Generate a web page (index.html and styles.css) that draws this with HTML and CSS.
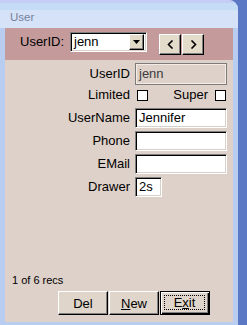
FILE: index.html
```html
<!DOCTYPE html>
<html>
<head>
<meta charset="utf-8">
<link rel="stylesheet" href="styles.css">
</head>
<body>
<div class="window">
  <div class="frame">
    <div class="titlebar">User</div>
    <div class="panel">
      <div class="header">
        <span class="hlabel">UserID:</span>
        <div class="combo">
          <span class="combo-text">jenn</span>
          <span class="combo-btn"><svg width="7" height="4" viewBox="0 0 7 4"><path d="M0 0h7L3.5 4z" fill="#000"/></svg></span>
        </div>
        <div class="navs">
          <button class="nav"><svg width="7" height="9" viewBox="0 0 7 9"><path d="M5.5 0.5L1.5 4.5L5.5 8.5" fill="none" stroke="#000" stroke-width="1.6"/></svg></button>
          <button class="nav"><svg width="7" height="9" viewBox="0 0 7 9"><path d="M1.5 0.5L5.5 4.5L1.5 8.5" fill="none" stroke="#000" stroke-width="1.6"/></svg></button>
        </div>
      </div>
      <div class="body">
        <div class="form">
          <div class="row row-id"><span class="label">UserID</span><div class="field disabled">jenn</div></div>
          <div class="row row-check"><span class="label">Limited</span><span class="check"></span><span class="label2">Super</span><span class="check check-last"></span></div>
          <div class="row"><span class="label">UserName</span><div class="field">Jennifer</div></div>
          <div class="row"><span class="label">Phone</span><div class="field"></div></div>
          <div class="row"><span class="label">EMail</span><div class="field"></div></div>
          <div class="row"><span class="label">Drawer</span><div class="field short">2s</div></div>
        </div>
        <div class="footer">
          <div class="status">1 of 6 recs</div>
          <div class="buttons">
            <button class="btn">Del</button>
            <button class="btn"><u>N</u>ew</button>
            <button class="btn default"><span class="focus">E<u>x</u>it</span></button>
          </div>
        </div>
      </div>
    </div>
  </div>
  <div class="edge"></div>
</div>
</body>
</html>
```

FILE: styles.css
```css
* { box-sizing: border-box; }
html, body { margin: 0; padding: 0; }
body {
  font-family: "Liberation Sans", Arial, sans-serif;
  background: #5a78c4;
}
.window {
  width: 247px;
  height: 325px;
  display: flex;
  background: #5a78c4;
}
.frame {
  width: 238px;
  height: 325px;
  display: flex;
  flex-direction: column;
  background: #b9cdf0;
  border-top-right-radius: 9px;
  overflow: hidden;
}
.edge {
  width: 9px;
  background: #5a78c4;
}
.titlebar {
  height: 28px;
  padding: 10px 0 0 10px;
  font-size: 11.5px;
  line-height: 14px;
  color: #74809c;
  background: linear-gradient(#c6cdf4 0 3px, #c4dcf6 3px 10px, #d6e2f8 10px);
}
.panel {
  margin: 0 5px;
  height: 294px;
  display: flex;
  flex-direction: column;
}
.header {
  height: 32px;
  background: #c49a9b;
  display: flex;
  align-items: flex-start;
  padding-left: 15px;
}
.hlabel {
  font-size: 13px;
  line-height: 20px;
  margin-top: 4px;
  width: 44px;
}
.combo {
  margin-left: 6px;
  margin-top: 4px;
  width: 77px;
  height: 20px;
  background: #fff;
  border: 1px solid;
  border-color: #808080 #fff #fff #808080;
  box-shadow: inset 1px 1px #000, inset -1px -1px #d8d0c8;
  display: flex;
  align-items: center;
  padding: 2px;
}
.combo-text {
  flex: 1;
  font-size: 13px;
  line-height: 16px;
  padding-left: 1px;
}
.combo-btn {
  width: 15px;
  height: 16px;
  background: #e2dac8;
  border: 1px solid;
  border-color: #fff #000 #000 #fff;
  box-shadow: inset -1px -1px #808080;
  display: flex;
  align-items: center;
  justify-content: center;
}
.navs {
  margin-left: 12px;
  margin-top: 6px;
  display: flex;
  gap: 1px;
}
.nav {
  width: 22px;
  height: 21px;
  padding: 0;
  background: #e4dccb;
  border: 1px solid;
  border-color: #fff #000 #000 #fff;
  box-shadow: inset -1px -1px #808080;
  display: flex;
  align-items: center;
  justify-content: center;
}
.body {
  flex: 1;
  background: #ded1c9;
  display: flex;
  flex-direction: column;
}
.form {
  padding-top: 3px;
  padding-right: 6px;
  display: flex;
  flex-direction: column;
  gap: 3px;
}
.row {
  display: flex;
  align-items: center;
  height: 20px;
  font-size: 13px;
}
.row-id { height: 22px; }
.row-check { height: 14px; margin-bottom: 3px; }
.label {
  width: 125px;
  text-align: right;
  margin-right: 5px;
  line-height: 16px;
}
.label2 {
  flex: 1;
  text-align: right;
  line-height: 16px;
}
.field {
  width: 92px;
  height: 20px;
  background: #fff;
  border: 1px solid;
  border-color: #808080 #fff #fff #808080;
  box-shadow: inset 1px 1px #000, inset -1px -1px #d8d0c8;
  padding-left: 3px;
  font-size: 13px;
  line-height: 18px;
  color: #000;
}
.field.disabled {
  height: 22px;
  background: #ddd1c9;
  border-color: #7c7c7c;
  box-shadow: inset 1px 1px #f4ece4, inset -1px -1px #f4ece4;
  color: #3c3c3c;
  line-height: 20px;
}
.field.short { width: 27px; }
.check {
  width: 11px;
  height: 11px;
  background: #fff;
  border: 1px solid #000;
  margin-left: 2px;
}
.check-last {
  margin-left: 7px;
  margin-right: 1px;
}
.footer {
  margin-top: auto;
  padding: 0 0 7px 7px;
}
.status {
  font-size: 11px;
  line-height: 13px;
  margin-bottom: 4px;
}
.buttons {
  margin-left: 46px;
  display: flex;
  gap: 1px;
}
.btn {
  width: 50px;
  height: 24px;
  padding: 0;
  font-family: "Liberation Sans", Arial, sans-serif;
  font-size: 13px;
  color: #000;
  background: #e0d5cb;
  border: 1px solid;
  border-color: #fff #000 #000 #fff;
  box-shadow: inset -1px -1px #808080;
}
.btn u { text-decoration: underline; }
.btn.default {
  border: 1px solid #000;
  box-shadow: inset 1px 1px #fff, inset -1px -1px #000, inset -2px -2px #808080;
  padding: 3px 4px 4px 3px;
}
.focus {
  display: block;
  height: 100%;
  border: 1px dotted #000;
  line-height: 14px;
}
```
